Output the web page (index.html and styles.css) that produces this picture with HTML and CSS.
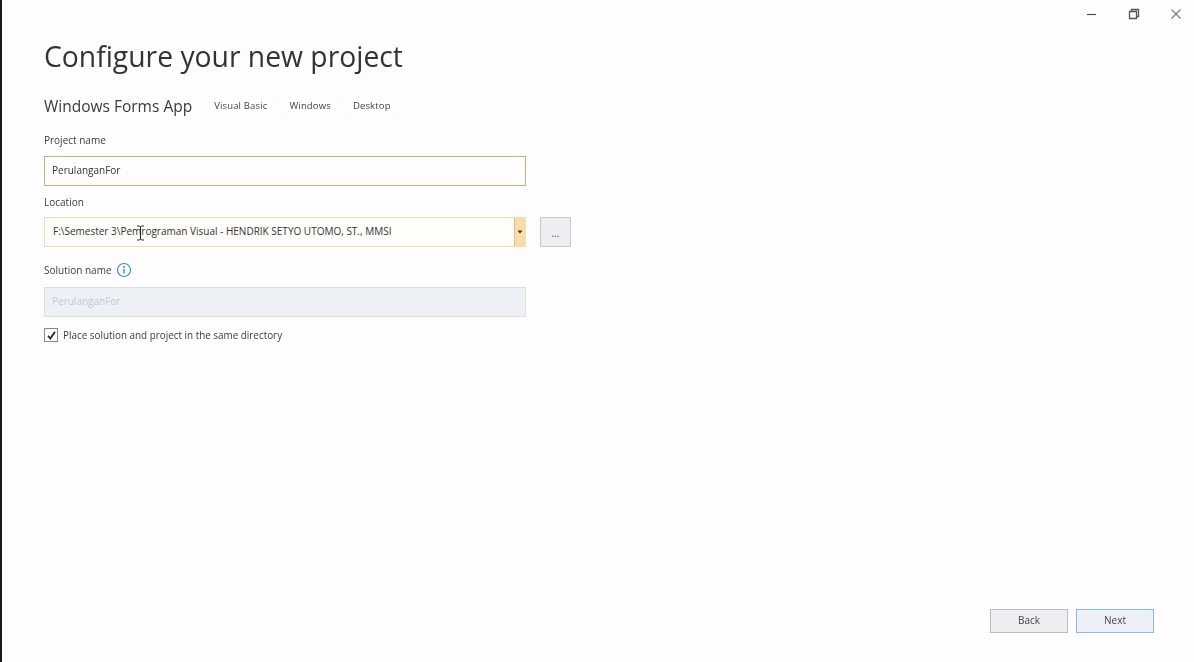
FILE: index.html
```html
<!DOCTYPE html>
<html lang="en">
<head>
<meta charset="utf-8">
<title>Configure your new project</title>
<link rel="stylesheet" href="styles.css">
</head>
<body>
<div class="window">
  <header class="controls">
    <svg class="ctl" width="12" height="12" viewBox="0 0 12 12"><path d="M1 6.500h9" stroke="#444" stroke-width="1.100" fill="none"/></svg>
    <svg class="ctl" width="12" height="12" viewBox="0 0 12 12"><path d="M1.500 3.500h7v7h-7zM3.500 3.500v-2h7v7h-2" stroke="#555" stroke-width="1.300" fill="none"/></svg>
    <svg class="ctl" width="12" height="12" viewBox="0 0 12 12"><path d="M1.500 1.500l9 9M10.500 1.500l-9 9" stroke="#777" stroke-width="1.100" fill="none"/></svg>
  </header>
  <main class="content">
    <h1 class="title">Configure your new project</h1>
    <div class="template">
      <span class="template-name">Windows Forms App</span>
      <ul class="tags">
        <li class="tag">Visual Basic</li>
        <li class="tag">Windows</li>
        <li class="tag">Desktop</li>
      </ul>
    </div>
    <div class="label label-project">Project name</div>
    <div class="input input-focus">PerulanganFor</div>
    <div class="label label-location">Location</div>
    <div class="location-row">
      <div class="combo">
        <span class="combo-text">F:\Semester 3\Pemrograman Visual - HENDRIK SETYO UTOMO, ST., MMSI</span>
        <span class="combo-arrow"><svg width="6" height="4" viewBox="0 0 6 4"><path d="M0.500 0.500h5L3 3.500z" fill="#333"/></svg></span>
        <svg class="cursor" width="9" height="16" viewBox="0 0 9 16"><path d="M1 1h2.500L4.500 2 5.500 1H8M4.500 2v12M1 15h2.500l1-1 1 1H8" stroke="#222" stroke-width="1" fill="none"/></svg>
      </div>
      <div class="browse">...</div>
    </div>
    <div class="label label-solution">
      <span>Solution name</span>
      <svg width="16" height="16" viewBox="0 0 16 16"><circle cx="8" cy="8" r="6.500" fill="none" stroke="#3f8fd0" stroke-width="1.200"/><path d="M8 7v4.500" stroke="#3a7fb8" stroke-width="1.300"/><circle cx="8" cy="5" r=".9" fill="#3a7fb8"/></svg>
    </div>
    <div class="input input-disabled">PerulanganFor</div>
    <label class="check-row">
      <span class="checkbox"><svg width="11" height="11" viewBox="0 0 11 11"><path d="M2 5.800l2.300 2.700L9 1.800" stroke="#222" stroke-width="1.700" fill="none"/></svg></span>
      <span>Place solution and project in the same directory</span>
    </label>
  </main>
  <footer class="footer">
    <div class="btn">Back</div>
    <div class="btn btn-primary">Next</div>
  </footer>
</div>
</body>
</html>
```
FILE: styles.css
```css
* { box-sizing: border-box; }
html, body { margin: 0; height: 100%; }
body {
  background: #fdfdfd;
  color: #333;
  font-family: "Open Sans", "Noto Sans", sans-serif;
  font-size: 10px;
  overflow: hidden;
}
.window {
  height: 662px;
  border-left: 2px solid #1a1a1a;
  display: flex;
  flex-direction: column;
  filter: blur(0.6px);
}
.controls {
  height: 28px;
  display: flex;
  justify-content: flex-end;
  align-items: center;
  gap: 30px;
  padding-right: 12px;
}
.content {
  flex: 1;
  padding: 0 0 0 42px;
  display: flex;
  flex-direction: column;
  align-items: flex-start;
}
.title {
  margin: 7px 0 0;
  font-size: 28.300px;
  line-height: 42px;
  font-weight: 400;
  color: #333;
}
.template {
  margin-top: 18px;
  height: 22px;
  display: flex;
  align-items: center;
  gap: 14px;
}
.template-name { font-size: 15.500px; color: #3a3a3a; }
.tags { list-style: none; margin: 0; padding: 0; display: flex; gap: 6px; }
.tag {
  background: #fff;
  border-radius: 9px;
  height: 18px;
  line-height: 18px;
  padding: 0 8px;
  font-size: 9.500px;
  letter-spacing: 0.150px;
  color: #444;
}
.label { font-size: 10px; line-height: 14px; color: #3c3c3c; }
.label-project { margin-top: 16px; }
.label-location { margin-top: 9px; }
.label-solution {
  margin-top: 15px;
  height: 16px;
  display: flex;
  align-items: center;
  gap: 4px;
}
.input {
  width: 482px;
  height: 30px;
  margin-top: 9px;
  padding-left: 7px;
  line-height: 26px;
  font-size: 10px;
  border: 1px solid;
}
.input-focus { background: #fdfdfb; border-color: #c9ae7c; color: #333; }
.input-disabled { background: #edf1f6; border-color: #d8dfe8; color: #c0cad6; }
.location-row { margin-top: 8px; display: flex; gap: 14px; }
.combo {
  position: relative;
  width: 482px;
  height: 30px;
  background: #fefdfa;
  border: 1px solid #f3dcb5;
  display: flex;
  align-items: center;
  justify-content: space-between;
}
.combo-text { padding: 0 0 2px 8px; font-size: 10px; color: #333; }
.combo-arrow {
  width: 11px;
  height: 28px;
  background: #fbdca8;
  border-left: 1px solid #dcc094;
  display: flex;
  align-items: center;
  justify-content: center;
}
.cursor { position: absolute; left: 91px; top: 7px; }
.browse {
  width: 31px;
  height: 30px;
  background: #eeeef2;
  border: 1px solid #c8cad0;
  text-align: center;
  line-height: 30px;
  font-size: 10px;
  color: #555;
}
.check-row {
  margin-top: 10px;
  display: flex;
  align-items: center;
  gap: 5px;
  font-size: 9.900px;
  line-height: 16px;
  color: #3c3c3c;
}
.checkbox {
  width: 14px;
  height: 14px;
  background: #fff;
  border: 1px solid #888;
  display: flex;
  align-items: center;
  justify-content: center;
}
.footer {
  display: flex;
  justify-content: flex-end;
  gap: 8px;
  padding: 0 40px 29px 0;
}
.btn {
  width: 78px;
  height: 24px;
  background: #eeeef2;
  border: 1px solid #bcbcbf;
  text-align: center;
  line-height: 20px;
  font-size: 10px;
  color: #444;
}
.btn-primary { background: #edf0f6; border-color: #8cb9e3; }
```
